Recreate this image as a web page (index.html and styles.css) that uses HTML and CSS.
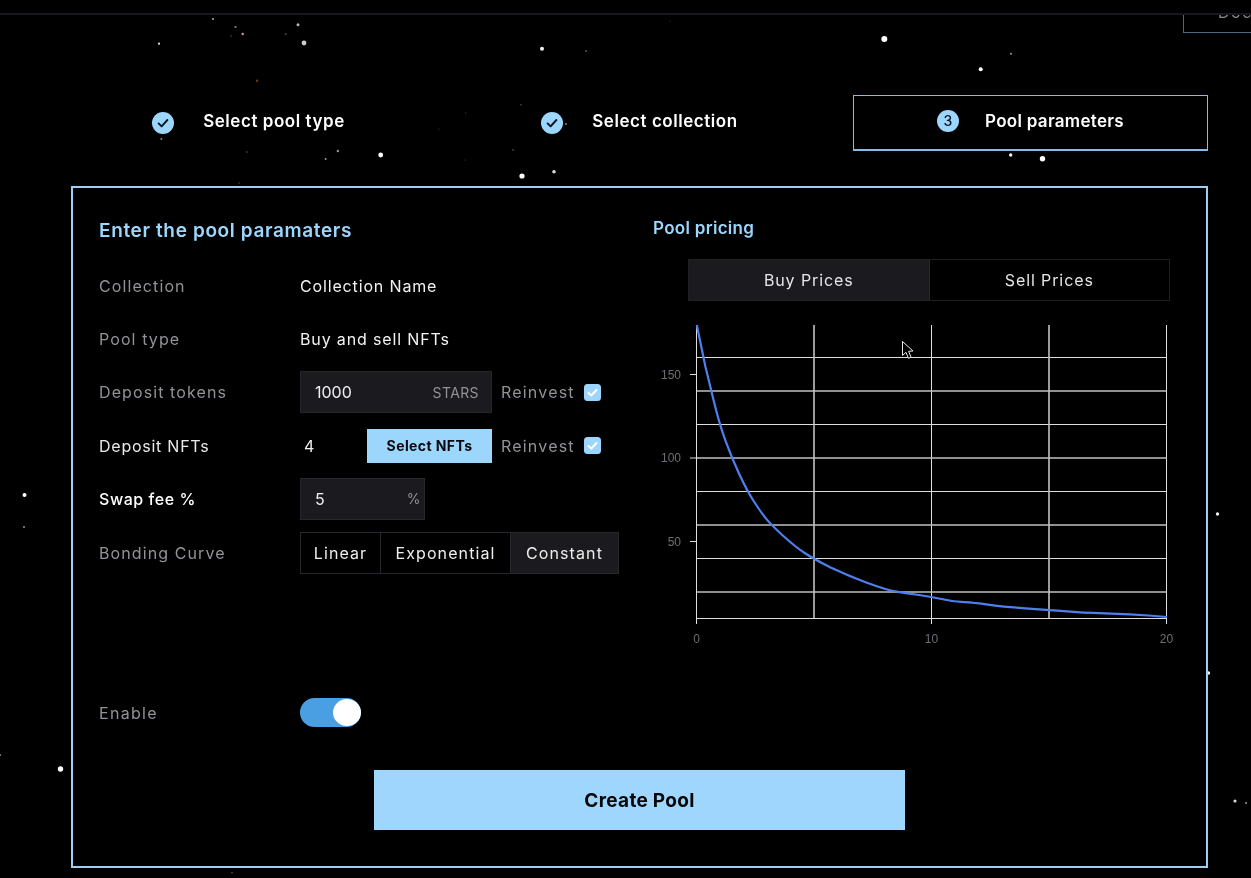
FILE: index.html
```html
<!DOCTYPE html>
<html lang="en">
<head>
<meta charset="utf-8">
<title>Pool parameters</title>
<link rel="stylesheet" href="styles.css">
</head>
<body>
<svg class="stars" width="1251" height="878" viewBox="0 0 1251 878" aria-hidden="true">
  <defs><filter id="soft" x="-100%" y="-100%" width="300%" height="300%"><feGaussianBlur stdDeviation="0.45"/></filter></defs>
  <g filter="url(#soft)" fill="#fff">
    <circle cx="213" cy="19" r="1" opacity=".7"/><circle cx="235.5" cy="27" r="1.1" fill="#e0a8e0" opacity=".7"/><circle cx="242.7" cy="34" r="1.2" fill="#f0c0f0" opacity=".8"/>
    <circle cx="231" cy="36" r=".9" fill="#a04050" opacity=".5"/><circle cx="285.8" cy="34" r=".9" opacity=".3"/><circle cx="298" cy="24.7" r="1.5" opacity=".7"/>
    <circle cx="304" cy="43" r="2.4" opacity=".8"/><circle cx="159" cy="43.7" r="1.1" opacity=".9"/><circle cx="542" cy="48.7" r="2" opacity=".95"/>
    <circle cx="586" cy="51" r="1" opacity=".35"/><circle cx="257" cy="80.7" r="1.2" fill="#c07030" opacity=".55"/>
    <circle cx="884.3" cy="39" r="3"/><circle cx="1011" cy="53.7" r="1" opacity=".6"/><circle cx="980.7" cy="69.3" r="2"/><circle cx="670" cy="21" r=".6" opacity=".25"/>
    <circle cx="161.4" cy="139" r="1" opacity=".5"/><circle cx="246.8" cy="152" r=".8" opacity=".4"/><circle cx="337.9" cy="151" r="1.3" opacity=".55"/>
    <circle cx="325.7" cy="159" r="1" opacity=".6"/><circle cx="380.7" cy="155" r="2.4"/><circle cx="522" cy="176" r="2.6"/>
    <circle cx="554" cy="171.7" r="1.8" opacity=".85"/><circle cx="513" cy="150" r=".8" opacity=".4"/><circle cx="521" cy="104.7" r=".8" opacity=".35"/>
    <circle cx="465.7" cy="113" r=".7" opacity=".2"/><circle cx="439" cy="129" r=".6" opacity=".25"/><circle cx="465" cy="160" r=".6" opacity=".25"/>
    <circle cx="239" cy="183" r=".7" opacity=".3"/><circle cx="566" cy="124" r="1" opacity=".5"/><circle cx="1010.7" cy="155" r="1.7" opacity=".95"/>
    <circle cx="1042.5" cy="158.7" r="2.7"/><circle cx="24.5" cy="495" r="2"/><circle cx="24" cy="527" r="1" opacity=".6"/>
    <circle cx="1217.5" cy="514" r="1.7" opacity=".95"/><circle cx="1208.5" cy="673" r="1.7" opacity=".95"/><circle cx="60.5" cy="769" r="2.7"/>
    <circle cx="1235" cy="801" r="1.6" opacity=".85"/><circle cx="1246" cy="803" r="1" opacity=".6"/><circle cx="0" cy="755" r="1" opacity=".6"/><circle cx="232" cy="872.7" r=".8" opacity=".4"/>
  </g>
</svg>

<div class="corner-tab"><span>Docs</span></div>
<header class="topbar"></header>

<main class="page">
  <ol class="stepper">
    <li class="step">
      <svg class="badge badge-done" viewBox="0 0 22 22" aria-hidden="true"><circle cx="11" cy="11" r="11" fill="#9dd6fd"/><path d="M6.6 11.4l3 3 5.8-6.4" fill="none" stroke="#07131d" stroke-width="1.9" stroke-linecap="round" stroke-linejoin="round"/></svg>
      <span class="step-text">Select pool type</span>
    </li>
    <li class="step">
      <svg class="badge badge-done" viewBox="0 0 22 22" aria-hidden="true"><circle cx="11" cy="11" r="11" fill="#9dd6fd"/><path d="M6.6 11.4l3 3 5.8-6.4" fill="none" stroke="#07131d" stroke-width="1.9" stroke-linecap="round" stroke-linejoin="round"/></svg>
      <span class="step-text">Select collection</span>
    </li>
    <li class="step step-current">
      <span class="badge badge-num">3</span>
      <span class="step-text">Pool parameters</span>
    </li>
  </ol>

  <section class="panel">
    <div class="columns">
      <div class="form-col">
        <h2 class="form-title">Enter the pool paramaters</h2>
        <div class="rows">
          <div class="row"><span class="label">Collection</span><span class="value">Collection Name</span></div>
          <div class="row"><span class="label">Pool type</span><span class="value">Buy and sell NFTs</span></div>
          <div class="row">
            <span class="label">Deposit tokens</span>
            <div class="control">
              <div class="field field-wide"><span>1000</span><span class="unit">STARS</span></div>
              <span class="reinvest">Reinvest</span>
              <svg class="tick" viewBox="0 0 17 17" aria-hidden="true"><rect width="17" height="17" rx="3.5" fill="#9dd6fd"/><path d="M4.5 9l2.8 2.5 5.2-5.5" fill="none" stroke="#fff" stroke-width="2" stroke-linecap="round" stroke-linejoin="round"/></svg>
            </div>
          </div>
          <div class="row">
            <span class="label label-on">Deposit NFTs</span>
            <div class="control">
              <span class="count">4</span>
              <button class="select-btn" type="button">Select NFTs</button>
              <span class="reinvest">Reinvest</span>
              <svg class="tick" viewBox="0 0 17 17" aria-hidden="true"><rect width="17" height="17" rx="3.5" fill="#9dd6fd"/><path d="M4.5 9l2.8 2.5 5.2-5.5" fill="none" stroke="#fff" stroke-width="2" stroke-linecap="round" stroke-linejoin="round"/></svg>
            </div>
          </div>
          <div class="row">
            <span class="label label-on label-strong">Swap fee %</span>
            <div class="control">
              <div class="field field-short"><span>5</span><span class="unit">%</span></div>
            </div>
          </div>
          <div class="row row-last">
            <span class="label">Bonding Curve</span>
            <div class="segments">
              <span class="seg seg-linear">Linear</span>
              <span class="seg seg-exp">Exponential</span>
              <span class="seg seg-const seg-active">Constant</span>
            </div>
          </div>
        </div>
      </div>

      <div class="chart-col">
        <h3 class="chart-title">Pool pricing</h3>
        <div class="tabs">
          <span class="tab tab-active">Buy Prices</span>
          <span class="tab">Sell Prices</span>
        </div>
        <svg class="chart" width="520" height="330" viewBox="660 320 520 330" role="img" aria-label="Buy price curve">
          <g class="grid">
            <path d="M696.5 357.5H1166.5M696.5 424.5H1166.5M696.5 491.5H1166.5M696.5 558.5H1166.5M931.5 325V618M1166.5 325V618"/>
            <path class="grid-soft" d="M696.5 391H1166.5M696.5 458H1166.5M696.5 525H1166.5M696.5 592H1166.5M814 325V618M1049 325V618"/>
          </g>
          <g class="axis">
            <path d="M696.5 325V618.5M696.5 618.5H1167M690 374.5H696M690 458H696M690 541.5H696M696.5 618V624M931.5 618V624M1166.5 618V624"/>
          </g>
          <g class="ticks">
            <text x="681" y="378.5" text-anchor="end">150</text>
            <text x="681" y="462" text-anchor="end">100</text>
            <text x="681" y="545.5" text-anchor="end">50</text>
            <text x="696.5" y="643" text-anchor="middle">0</text>
            <text x="931.5" y="643" text-anchor="middle">10</text>
            <text x="1166.5" y="643" text-anchor="middle">20</text>
          </g>
          <path class="curve" d="M696.8 325L705.5 367Q709 381 714.1 402.2Q719.2 423.3 725.45 440.65Q731.7 458 739.45 474.5Q747.2 491 753.6 501Q760 511 765.45 517.85Q770.9 524.7 783.05 535.7Q795.2 546.7 804.7 553Q814.2 559.3 830.1 567.15Q846 575 866.25 582.5Q886.5 590 896.65 591.65Q906.8 593.3 919.15 595Q931.5 596.7 942.75 599.2Q954 601.7 964.2 602.2Q974.4 602.7 987.9 604.7Q1001.4 606.7 1025.1 608.35Q1048.8 610 1070.75 611.65Q1092.7 613.3 1111.35 613.65Q1130 614 1148.5 615.5L1167 617"/>
          <path class="pointer" d="M902.5 341.5V355.5L906 352.3L908.4 358.3L911 357.2L908.6 351.3L913 351Z"/>
        </svg>
      </div>
    </div>

    <div class="enable-row">
      <span class="label label-enable">Enable</span>
      <span class="toggle"><span class="knob"></span></span>
    </div>

    <div class="submit-row">
      <button class="create-btn" type="button">Create Pool</button>
    </div>
  </section>
</main>
</body>
</html>
```
FILE: styles.css
```css
* { box-sizing: border-box; }
html, body { margin: 0; padding: 0; }
body {
  width: 1251px;
  height: 878px;
  overflow: hidden;
  position: relative;
  background: #000;
  color: #fff;
  font-family: Inter, "Liberation Sans", sans-serif;
  font-size: 16px;
}
.stars { position: absolute; left: 0; top: 0; }
.topbar {
  position: relative;
  height: 15px;
  background: #000;
  border-bottom: 2px solid #17171c;
}
.corner-tab {
  position: absolute;
  right: -1px;
  top: 0;
  width: 69px;
  height: 33px;
  border: 1px solid #4b6a80;
  color: #8a8a90;
  font-size: 16px;
  line-height: 20px;
  padding: 0 0 0 34px;
  overflow: hidden;
  letter-spacing: 1.5px;
}
.corner-tab span { display: block; margin-top: 1px; }
.page {
  position: relative;
  width: 1137px;
  margin: 80px 0 0 71px;
}
.stepper {
  list-style: none;
  margin: 0;
  padding: 0;
  display: flex;
  justify-content: space-between;
}
.step {
  width: 355px;
  height: 56px;
  display: flex;
  align-items: center;
  justify-content: center;
  gap: 29px;
  padding-bottom: 4px;
}
.step-current {
  border: 1px solid #84bde8;
  border-bottom-width: 2px;
  gap: 26px;
  padding-bottom: 3px;
}
.step-text {
  font-weight: 600;
  font-size: 17px;
  letter-spacing: 0.55px;
}
.step-current .step-text { letter-spacing: 0.3px; }
.badge { width: 22px; height: 22px; flex: none; }
.badge-done { position: relative; top: 2px; }
.badge-num {
  border-radius: 50%;
  background: #9dd6fd;
  color: #07131d;
  font-size: 14px;
  font-weight: 500;
  line-height: 22px;
  text-align: center;
}
.panel {
  margin-top: 35px;
  height: 682px;
  border: 2px solid #9ccff5;
  background: #000;
  padding: 26px 26px 0;
}
.columns { display: flex; height: 436px; }
.form-col { width: 554px; flex: none; }
.form-title {
  margin: 0 0 17px;
  font-size: 19px;
  line-height: 34px;
  font-weight: 600;
  color: #9dd6fd;
  letter-spacing: 0.63px;
}
.rows { display: flex; flex-direction: column; gap: 11.2px; }
.row {
  display: grid;
  grid-template-columns: 201px 1fr;
  align-items: center;
  height: 42px;
}
.row-last { margin-top: 1px; }
.label { color: #929298; font-size: 16px; letter-spacing: 1.1px; }
.label-enable { letter-spacing: 1.3px; }
.label-on { color: #e9e9ec; letter-spacing: 0.75px; }
.label-strong { color: #fff; font-weight: 500; letter-spacing: 0.55px; }
.value { color: #f2f2f4; font-size: 16px; letter-spacing: 0.85px; }
.control { display: flex; align-items: center; height: 42px; }
.field {
  height: 42px;
  display: flex;
  align-items: center;
  justify-content: space-between;
  background: #1a1a1f;
  border: 1px solid #26262c;
  color: #eee;
  padding: 0 12px 0 14px;
}
.field-wide { width: 192px; }
.field-short { width: 125px; padding-right: 3px; }
.unit { color: #929298; font-size: 14px; letter-spacing: 0.4px; }
.reinvest {
  margin-left: 9px;
  color: #929298;
  width: 83px;
  letter-spacing: 1.2px;
}
.tick { width: 17px; height: 17px; flex: none; }
.count { width: 67px; padding-left: 4px; color: #eee; }
.select-btn {
  width: 125px;
  height: 34px;
  border: 0;
  background: #9dd6fd;
  color: #07090c;
  font: 700 14px Inter, "Liberation Sans", sans-serif;
  letter-spacing: 0.4px;
  padding: 0;
}
.segments {
  display: flex;
  width: 319px;
  height: 42px;
  border: 1px solid #26262c;
}
.seg {
  display: flex;
  align-items: center;
  justify-content: center;
  color: #eee;
  border-right: 1px solid #26262c;
  letter-spacing: 1.1px;
}
.seg-linear { width: 80px; }
.seg-exp { width: 130px; }
.seg-const { flex: 1; border-right: 0; }
.seg-active { background: #1a1a1f; }
.chart-col { flex: 1; position: relative; }
.chart-title {
  margin: 0 0 17px;
  font-size: 17px;
  line-height: 28px;
  font-weight: 600;
  color: #9dd6fd;
  letter-spacing: 0.3px;
}
.tabs {
  margin-left: 35px;
  width: 482px;
  height: 42px;
  display: flex;
  border: 1px solid #1f1f24;
}
.tab {
  flex: 1;
  display: flex;
  align-items: center;
  justify-content: center;
  color: #e6e6e9;
  letter-spacing: 0.9px;
}
.tab-active { background: #1a1a1f; border-right: 1px solid #26262c; }
.chart { display: block; margin: 19px 0 0 7px; }
.grid path { fill: none; stroke: #dedede; stroke-width: 1; }
.grid .grid-soft { stroke: #c0c0c0; stroke-width: 1.6; }
.axis path { fill: none; stroke: #dedede; stroke-width: 1; }
.ticks text { fill: #6e6e76; font: 12px "Liberation Sans", sans-serif; }
.curve { fill: none; stroke: #4f7fee; stroke-width: 2.2; stroke-linejoin: round; }
.pointer { fill: #000; stroke: #e8e8e8; stroke-width: 1; }
.enable-row {
  margin-top: 48px;
  height: 29px;
  display: grid;
  grid-template-columns: 201px 1fr;
  align-items: center;
}
.toggle {
  display: flex;
  justify-content: flex-end;
  width: 61px;
  height: 29px;
  border-radius: 15px;
  background: #4a9fe3;
  padding: 1px 0 0;
}
.knob { width: 28px; height: 27px; border-radius: 50%; background: #fff; }
.submit-row { display: flex; justify-content: center; margin-top: 43px; }
.create-btn {
  width: 531px;
  height: 60px;
  border: 0;
  background: #9fd6fd;
  color: #050608;
  font: 700 19px Inter, "Liberation Sans", sans-serif;
  letter-spacing: 0.3px;
}
```
